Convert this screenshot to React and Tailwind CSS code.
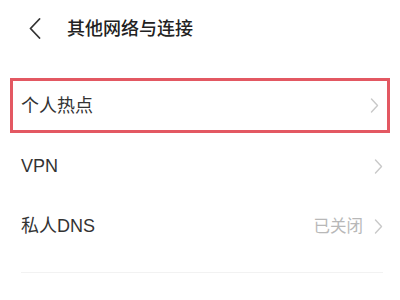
import React from "react";

const font = { fontFamily: '"Noto Sans", "Noto Sans CJK SC", sans-serif' };
const rowFont = { fontFamily: '"Liberation Sans", "Noto Sans CJK SC", sans-serif' };

function Chevron() {
  return (
    <svg width="9" height="15" viewBox="0 0 9 15" fill="none">
      <polyline points="1.5,1 7.5,7.5 1.5,14" stroke="#c9c9c9" strokeWidth="1.4" strokeLinecap="round" strokeLinejoin="round" />
    </svg>
  );
}

export default function App() {
  return (
    <div className="w-[400px] h-[300px] bg-white overflow-hidden" style={font}>
      <div className="h-[56px] flex items-center">
        <div className="ml-[29px] w-[12px] flex items-center">
          <svg width="12" height="21" viewBox="0 0 12 21" fill="none">
            <polyline points="10.5,1 1.5,10.5 10.5,20" stroke="#333" strokeWidth="1.8" strokeLinecap="round" strokeLinejoin="round" />
          </svg>
        </div>
        <div className="ml-[26px] text-[18px] font-medium text-[#222] leading-none">其他网络与连接</div>
      </div>
      <div className="mt-[22px] mx-[10px] h-[55px] border-[3px] border-[#e35862] flex items-center justify-between pl-[8px] pr-[8px]">
        <span className="text-[18px] text-[#333] leading-none" style={rowFont}>个人热点</span>
        <Chevron />
      </div>
      <div className="mt-[3px] h-[60px] flex items-center justify-between pl-[21px] pr-[17px]">
        <span className="text-[18px] text-[#333] leading-none" style={rowFont}>VPN</span>
        <Chevron />
      </div>
      <div className="h-[60px] flex items-center justify-between pl-[21px] pr-[17px]">
        <span className="text-[18px] text-[#333] leading-none" style={rowFont}>私人DNS</span>
        <div className="flex items-center gap-[11px]">
          <span className="text-[16.5px] text-[#b8b8b8] leading-none">已关闭</span>
          <Chevron />
        </div>
      </div>
      <div className="mt-[16px] mx-[21px] mr-[17px] h-px bg-[#f2f2f2]"></div>
    </div>
  );
}
